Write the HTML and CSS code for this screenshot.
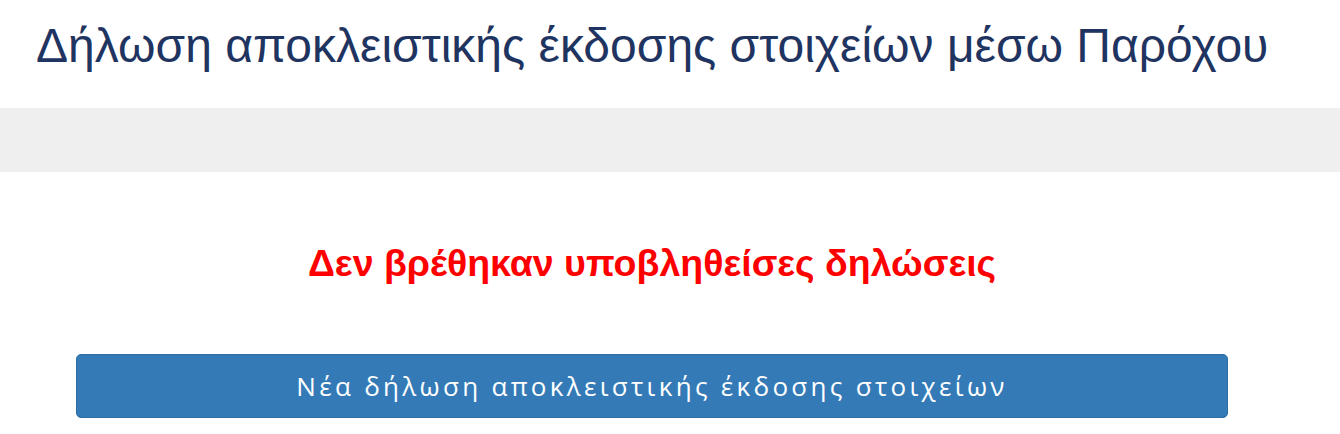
FILE: index.html
```html
<!DOCTYPE html>
<html lang="el">
<head>
<meta charset="utf-8">
<link rel="stylesheet" href="styles.css">
</head>
<body>
<header class="page-header">
  <h1 class="page-title">Δήλωση αποκλειστικής έκδοσης στοιχείων μέσω Παρόχου</h1>
</header>
<div class="band"></div>
<main class="content">
  <p class="empty-msg">Δεν βρέθηκαν υποβληθείσες δηλώσεις</p>
  <div class="actions">
    <button class="btn-primary" type="button">Νέα δήλωση αποκλειστικής έκδοσης στοιχείων</button>
  </div>
</main>
</body>
</html>
```
FILE: styles.css
```css
html, body {
  margin: 0;
  padding: 0;
  background: #ffffff;
}
body {
  font-family: "Liberation Sans", Arial, sans-serif;
}
.page-header {
  height: 108px;
  padding: 22px 0 0 36px;
  box-sizing: border-box;
}
.page-title {
  margin: 0;
  font-weight: normal;
  font-size: 48px;
  color: #1f3461;
  line-height: 48px;
}
.band {
  height: 64px;
  background: #efefef;
}
.content {
  width: 1304px;
  padding-top: 63px;
}
.empty-msg {
  margin: 0;
  text-align: center;
  color: #ff0000;
  font-weight: bold;
  font-size: 37.5px;
  line-height: 56px;
}
.actions {
  padding: 63px 76px 0 76px;
}
.btn-primary {
  display: block;
  width: 100%;
  height: 64px;
  background: #337ab7;
  border: 1px solid #2e6da4;
  border-radius: 5px;
  color: #ffffff;
  font-family: "Open Sans", sans-serif;
  font-size: 26px;
  letter-spacing: 3.3px;
  padding: 0;
}
```
